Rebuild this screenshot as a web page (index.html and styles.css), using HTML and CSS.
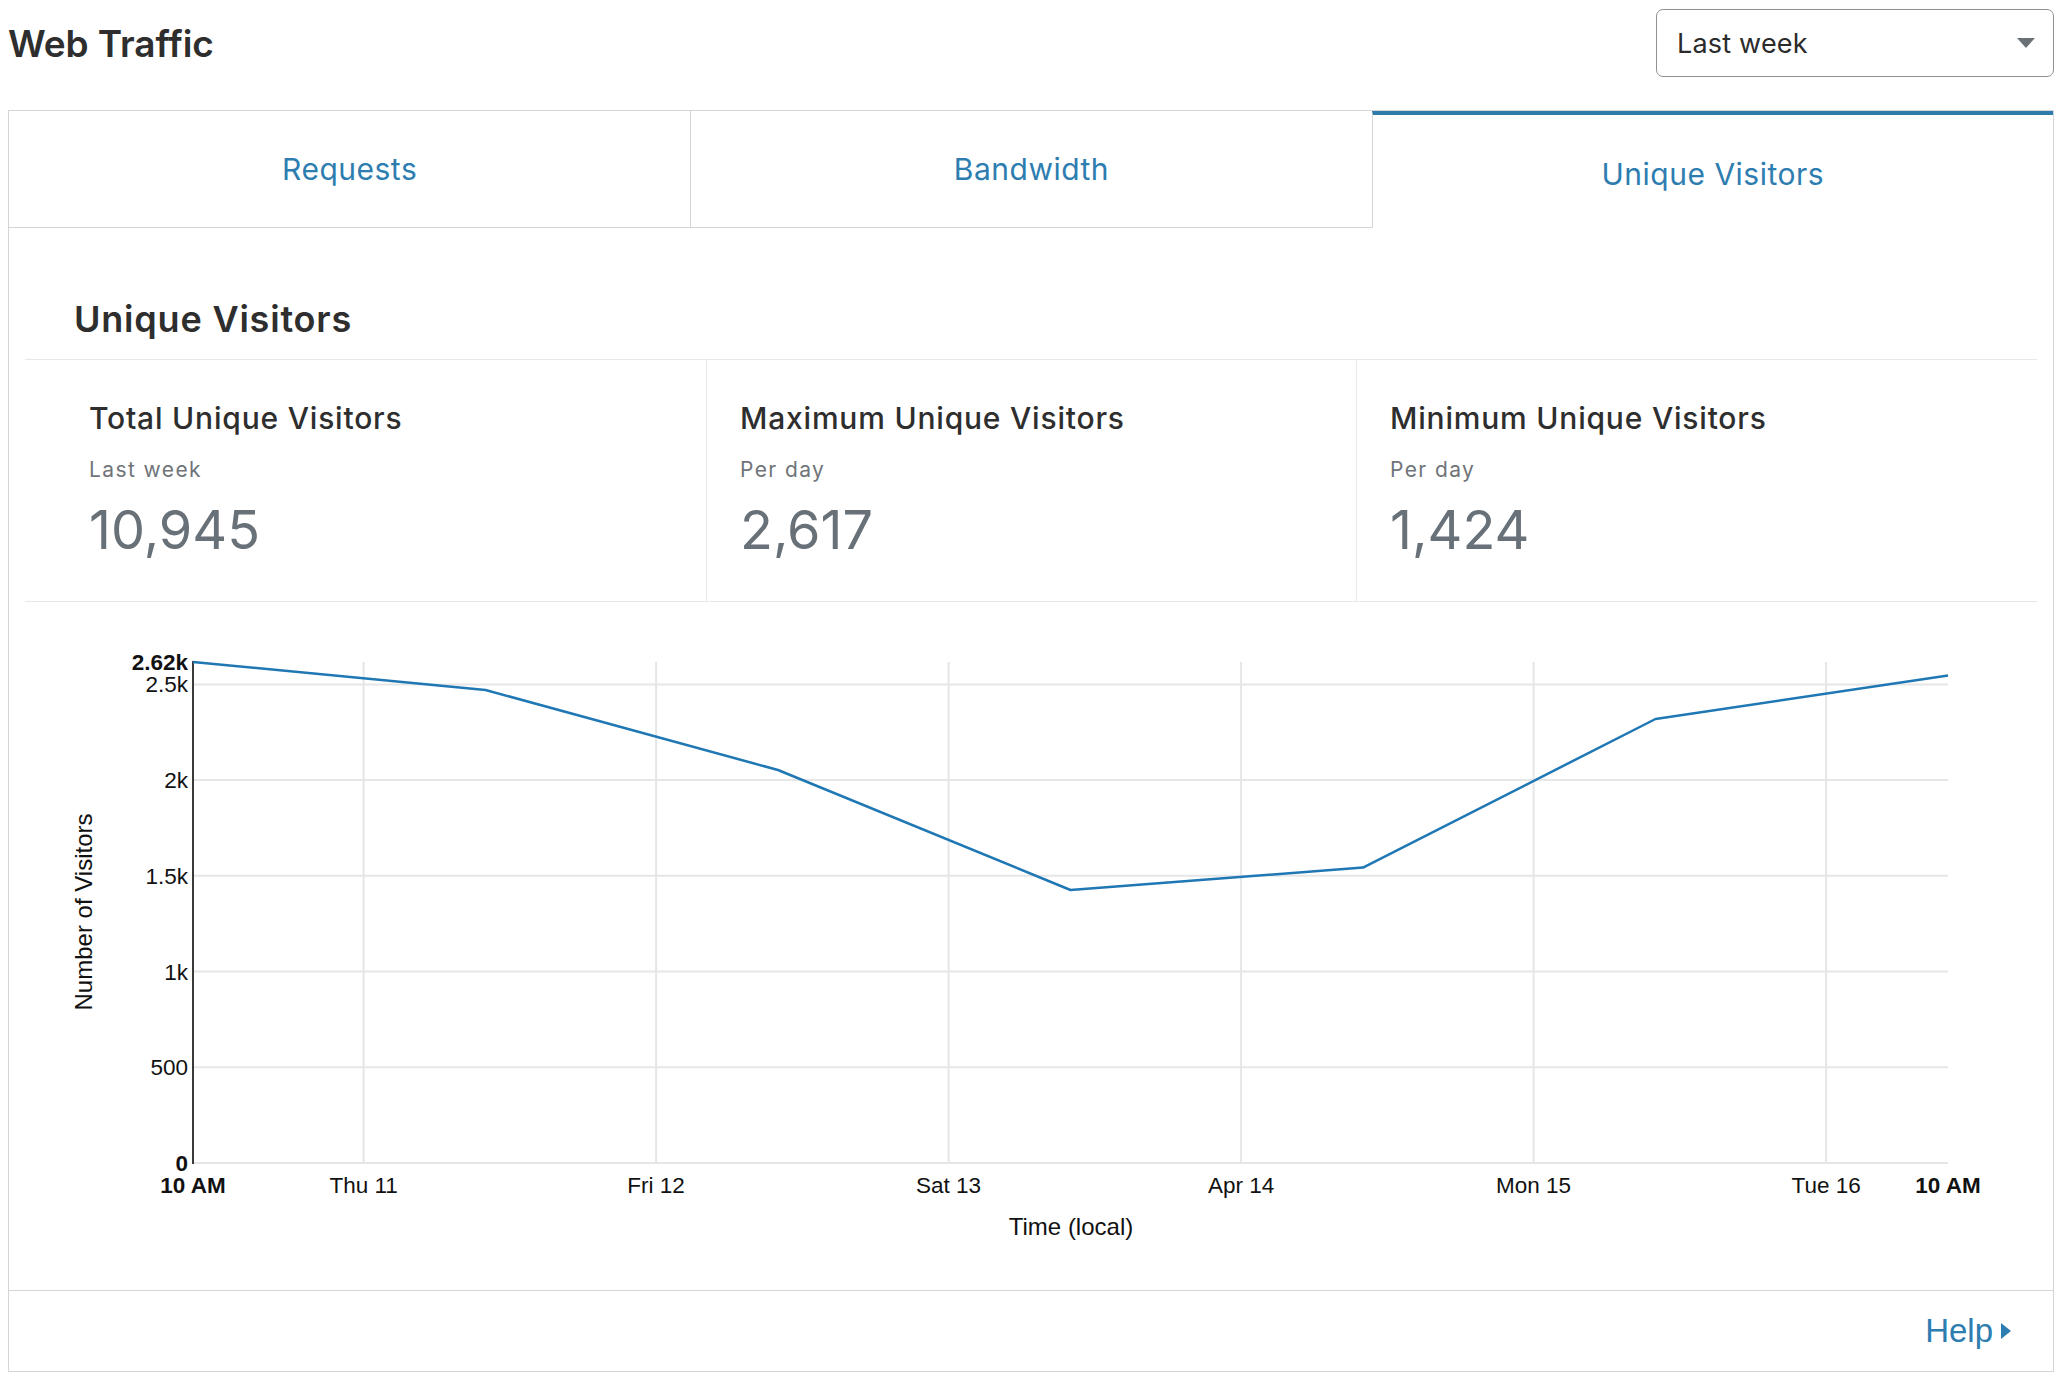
FILE: index.html
```html
<!DOCTYPE html>
<html lang="en">
<head>
<meta charset="utf-8">
<title>Web Traffic</title>
<link rel="stylesheet" href="styles.css">
</head>
<body>
<header class="top">
  <h1 class="title">Web Traffic</h1>
  <div class="select">
    <span class="select-label">Last week</span>
    <span class="select-caret"></span>
  </div>
</header>

<section class="card">
  <nav class="tabs">
    <div class="tab">Requests</div>
    <div class="tab">Bandwidth</div>
    <div class="tab active">Unique Visitors</div>
  </nav>

  <div class="panel">
    <h2 class="panel-title">Unique Visitors</h2>

    <div class="stats">
      <div class="stat first">
        <div class="stat-title">Total Unique Visitors</div>
        <div class="stat-sub">Last week</div>
        <div class="stat-value">10,945</div>
      </div>
      <div class="stat">
        <div class="stat-title">Maximum Unique Visitors</div>
        <div class="stat-sub">Per day</div>
        <div class="stat-value">2,617</div>
      </div>
      <div class="stat">
        <div class="stat-title">Minimum Unique Visitors</div>
        <div class="stat-sub">Per day</div>
        <div class="stat-value">1,424</div>
      </div>
    </div>

    <div class="chart">
      <svg class="chart-svg" width="2012" height="688" viewBox="0 0 2012 688">
        <g class="grid">
          <line x1="168" y1="561" x2="1923" y2="561"/>
          <line x1="168" y1="465.3" x2="1923" y2="465.3"/>
          <line x1="168" y1="369.6" x2="1923" y2="369.6"/>
          <line x1="168" y1="273.8" x2="1923" y2="273.8"/>
          <line x1="168" y1="178.1" x2="1923" y2="178.1"/>
          <line x1="168" y1="82.4" x2="1923" y2="82.4"/>
          <line x1="338.6" y1="60" x2="338.6" y2="561"/>
          <line x1="631.1" y1="60" x2="631.1" y2="561"/>
          <line x1="923.6" y1="60" x2="923.6" y2="561"/>
          <line x1="1216.1" y1="60" x2="1216.1" y2="561"/>
          <line x1="1508.6" y1="60" x2="1508.6" y2="561"/>
          <line x1="1801.1" y1="60" x2="1801.1" y2="561"/>
        </g>
        <line class="y-axis" x1="168" y1="59" x2="168" y2="562"/>
        <g class="y-ticks">
          <text class="bold" x="163" y="68">2.62k</text>
          <text x="163" y="90">2.5k</text>
          <text x="163" y="186">2k</text>
          <text x="163" y="282">1.5k</text>
          <text x="163" y="378">1k</text>
          <text x="163" y="473">500</text>
          <text class="bold" x="163" y="569">0</text>
        </g>
        <g class="x-ticks">
          <text class="bold" x="168" y="591">10 AM</text>
          <text x="338.6" y="591">Thu 11</text>
          <text x="631.1" y="591">Fri 12</text>
          <text x="923.6" y="591">Sat 13</text>
          <text x="1216.1" y="591">Apr 14</text>
          <text x="1508.6" y="591">Mon 15</text>
          <text x="1801.1" y="591">Tue 16</text>
          <text class="bold" x="1923" y="591">10 AM</text>
        </g>
        <text class="axis-title" x="1046" y="633">Time (local)</text>
        <text class="axis-title" transform="translate(67 310) rotate(-90)">Number of Visitors</text>
        <polyline class="series" points="168,60 460.5,88 753,168 1045.5,288 1338,265.6 1630.5,117 1923,73.6"/>
      </svg>
    </div>
  </div>

  <footer class="card-foot">
    <a class="help" href="#">Help<span class="help-caret"></span></a>
  </footer>
</section>
</body>
</html>
```

FILE: styles.css
```css
html, body {
  background: #ffffff;
}

body {
  margin: 8px;
  font-family: Inter, "Noto Sans", sans-serif;
  color: #333333;
}

.top {
  height: 70px;
  display: flex;
  align-items: center;
  justify-content: space-between;
  margin-bottom: 32px;
}

.title {
  margin: 0;
  font-size: 37px;
  font-weight: 600;
  color: #2e2e2e;
  letter-spacing: -0.1px;
}

.select {
  box-sizing: border-box;
  width: 398px;
  height: 68px;
  border: 1.5px solid #8d9297;
  border-radius: 7px;
  display: flex;
  align-items: center;
  justify-content: space-between;
  padding: 0 18px 0 20px;
}

.select-label {
  font-size: 27px;
  letter-spacing: 0.2px;
  color: #2b2b2b;
}

.select-caret {
  width: 0;
  height: 0;
  border-left: 9px solid transparent;
  border-right: 9px solid transparent;
  border-top: 10px solid #6b7075;
}

.card {
  border: 1px solid #d5d5d5;
}

.tabs {
  display: grid;
  grid-template-columns: repeat(3, 1fr);
}

.tab {
  height: 116px;
  display: flex;
  align-items: center;
  justify-content: center;
  font-size: 30px;
  letter-spacing: 0.5px;
  color: #2e7db0;
  border-bottom: 1px solid #d5d5d5;
  border-left: 1px solid #d5d5d5;
}

.tab:first-child {
  border-left: none;
}

.tab.active {
  box-sizing: border-box;
  height: 117px;
  border-bottom: none;
  border-top: 4px solid #2e7bab;
  padding-top: 4px;
}

.panel {
  padding: 0 16px;
}

.panel-title {
  margin: 0;
  padding: 70px 0 19px 49px;
  font-size: 36px;
  line-height: 42px;
  font-weight: 600;
  letter-spacing: 0.8px;
  color: #2e2e2e;
}

.stats {
  display: grid;
  grid-template-columns: 681px 650px 1fr;
  border-top: 1px solid #e8e8e8;
  border-bottom: 1px solid #e8e8e8;
}

.stat {
  padding: 40px 0 39px 33px;
  border-left: 1px solid #e8e8e8;
}

.stat.first {
  padding-left: 64px;
  border-left: none;
}

.stat-title {
  font-size: 30px;
  line-height: 36px;
  font-weight: 500;
  letter-spacing: 0.8px;
  color: #2e2e2e;
}

.stat-sub {
  margin-top: 20px;
  font-size: 21px;
  line-height: 28px;
  letter-spacing: 1.4px;
  color: #6f7479;
}

.stat-value {
  margin-top: 14px;
  font-size: 54px;
  line-height: 64px;
  font-weight: 400;
  color: #687078;
}

.chart {
  height: 688px;
}

.chart-svg {
  display: block;
  font-family: "Liberation Sans", Arial, sans-serif;
}

.grid line {
  stroke: #e6e6e6;
  stroke-width: 2;
}

.y-axis {
  stroke: #3a3a3a;
  stroke-width: 2;
}

.y-ticks text {
  font-size: 22.5px;
  text-anchor: end;
  fill: #111111;
}

.x-ticks text {
  font-size: 22.5px;
  text-anchor: middle;
  fill: #111111;
}

.chart-svg .bold {
  font-weight: 700;
}

.axis-title {
  font-size: 24px;
  text-anchor: middle;
  fill: #111111;
}

.series {
  fill: none;
  stroke: #1f77b4;
  stroke-width: 2.5;
  stroke-linejoin: round;
}

.card-foot {
  border-top: 1px solid #d5d5d5;
  height: 80px;
  display: flex;
  align-items: center;
  justify-content: flex-end;
  padding-right: 42px;
}

.help {
  display: flex;
  align-items: center;
  gap: 8px;
  font-family: "Liberation Sans", Arial, sans-serif;
  font-size: 33px;
  color: #2e7db0;
  text-decoration: none;
}

.help-caret {
  width: 0;
  height: 0;
  border-top: 8px solid transparent;
  border-bottom: 8px solid transparent;
  border-left: 10px solid #2e7db0;
}
```
